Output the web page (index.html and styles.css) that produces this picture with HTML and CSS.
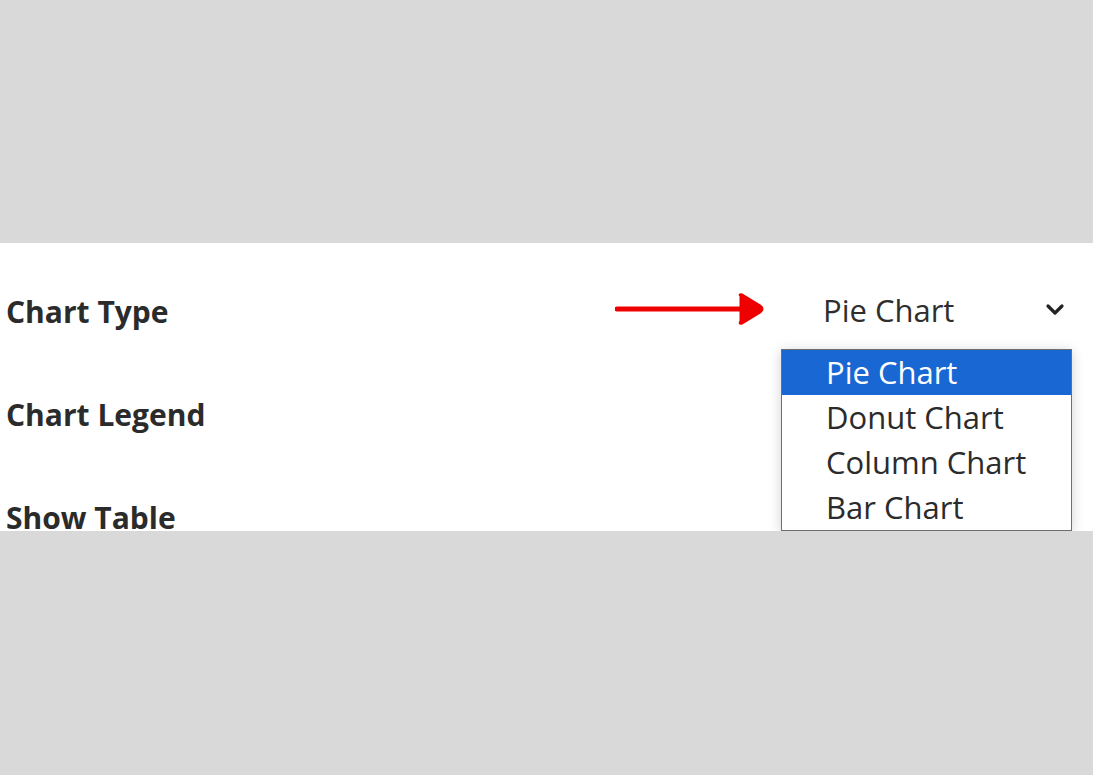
FILE: index.html
```html
<!DOCTYPE html>
<html>
<head>
<meta charset="utf-8">
<link rel="stylesheet" href="styles.css">
</head>
<body>
<div class="page">
  <div class="panel">
    <div class="row">
      <div class="label">Chart Type</div>
      <div class="control">
        <svg class="pointer" width="150" height="32" viewBox="0 0 150 32">
          <line x1="2" y1="16" x2="128" y2="16" stroke="#ee0000" stroke-width="5" stroke-linecap="round"/>
          <path d="M126 3 Q124 1 127 2 L145 13 Q149 16 145 19 L127 30 Q124 31 126 28 Z" fill="#ee0000" stroke="#ee0000" stroke-width="3" stroke-linejoin="round"/>
        </svg>
        <div class="select">
          <span class="value">Pie Chart</span>
          <svg class="chevron" width="20" height="14" viewBox="0 0 20 14">
            <path d="M3 4 L10 11 L17 4" fill="none" stroke="#222" stroke-width="3.2" stroke-linecap="round" stroke-linejoin="round"/>
          </svg>
        </div>
      </div>
    </div>
    <div class="row">
      <div class="label">Chart Legend</div>
    </div>
    <div class="row">
      <div class="label">Show Table</div>
    </div>
    <ul class="menu">
      <li class="option selected">Pie Chart</li>
      <li class="option">Donut Chart</li>
      <li class="option">Column Chart</li>
      <li class="option">Bar Chart</li>
    </ul>
  </div>
</div>
</body>
</html>
```
FILE: styles.css
```css
html, body {
  margin: 0;
  padding: 0;
  background: #d9d9d9;
}
.page {
  width: 1093px;
  height: 775px;
  padding-top: 243px;
  box-sizing: border-box;
}
.panel {
  position: relative;
  background: #ffffff;
  height: 288px;
  overflow: hidden;
  padding-top: 49px;
  box-sizing: border-box;
  font-family: "Open Sans", "Noto Sans", sans-serif;
  color: #2b2b2b;
}
.row {
  display: flex;
  align-items: center;
  height: 40px;
  margin-bottom: 63px;
}
.label {
  padding-left: 6px;
  font-size: 30px;
  line-height: 40px;
  font-weight: 700;
  flex: 1;
}
.control {
  display: flex;
  align-items: center;
}
.pointer {
  display: block;
  margin-right: 58px;
  margin-top: -6px;
}
.select {
  display: flex;
  align-items: center;
  width: 270px;
  padding-right: 28px;
  box-sizing: border-box;
}
.value {
  flex: 1;
  font-size: 31px;
  line-height: 40px;
  color: #2e2e2e;
  margin-top: -4px;
}
.chevron {
  display: block;
  margin-top: -6px;
}
.menu {
  position: absolute;
  left: 781px;
  top: 106px;
  width: 291px;
  margin: 0;
  padding: 0;
  list-style: none;
  border: 1px solid #6f6f6f;
  box-sizing: border-box;
  background: #fff;
  box-shadow: 0 2px 12px rgba(0,0,0,0.18);
}
.option {
  height: 45px;
  line-height: 45px;
  padding-left: 44px;
  font-size: 31px;
  color: #2b2b2b;
}
.option.selected {
  background: #1967d2;
  color: #ffffff;
}
```
